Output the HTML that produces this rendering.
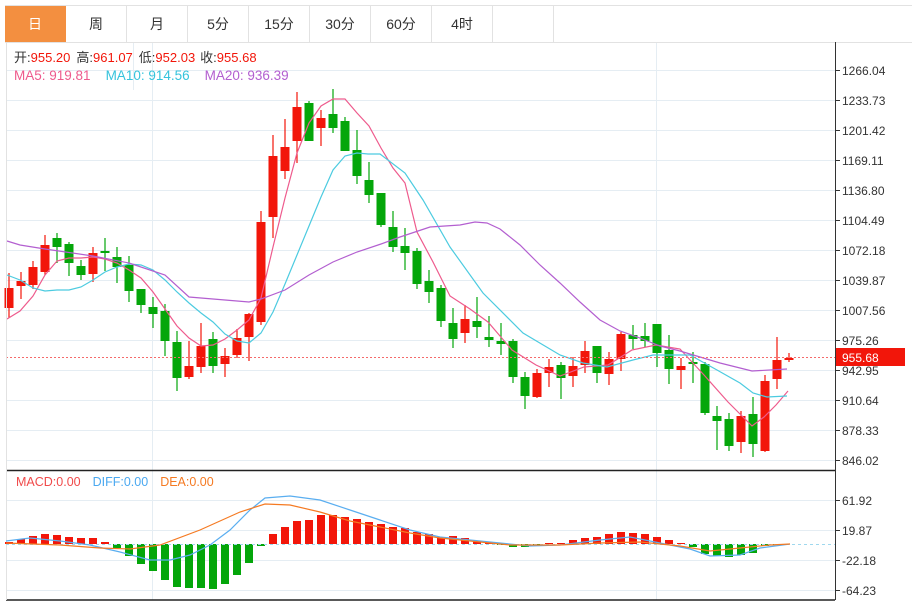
<!DOCTYPE html>
<html><head><meta charset="utf-8">
<style>
html,body{margin:0;padding:0;background:#fff;}
body{width:912px;height:603px;overflow:hidden;position:relative;font-family:"Liberation Sans","Noto Sans CJK SC",sans-serif;}
.tabs{position:absolute;left:5px;top:5px;height:36px;display:flex;border-top:1px solid #e2e2e2;border-bottom:1px solid #e2e2e2;width:907px;}
.tab{width:60px;border-right:1px solid #e2e2e2;text-align:center;line-height:36px;font-size:14px;color:#333;}
.tab.on{background:#f38f40;color:#fff;border-right:1px solid #f38f40;}
svg{position:absolute;left:0;top:0;}
</style></head><body>
<div class="tabs">
<div class="tab on">日</div><div class="tab">周</div><div class="tab">月</div><div class="tab">5分</div><div class="tab">15分</div><div class="tab">30分</div><div class="tab">60分</div><div class="tab">4时</div><div class="tab"></div>
</div>
<svg id="s" width="912" height="603" xmlns="http://www.w3.org/2000/svg" font-family="Liberation Sans, Noto Sans CJK SC, sans-serif"></svg>
<script>
var s=document.getElementById('s');var h='';
function L(x1,y1,x2,y2,c,w,extra){h+='<line x1="'+x1+'" y1="'+y1+'" x2="'+x2+'" y2="'+y2+'" stroke="'+c+'" stroke-width="'+(w||1)+'" '+(extra||'')+'/>';}
function T(x,y,t,c,sz){h+='<text x="'+x+'" y="'+y+'" fill="'+c+'" font-size="'+(sz||12)+'">'+t+'</text>';}
for(var i=0;i<14;i++){L(6,70.5+30*i,835,70.5+30*i,'#e5edf3');}
[500,530,560,590].forEach(function(y){L(6,y+.5,835,y+.5,'#e5edf3');});
L(152.5,42,152.5,600,'#e5edf3');L(656.5,42,656.5,600,'#e5edf3');
L(133.5,42,133.5,90,'#e5edf3');
L(6,42.5,912,42.5,'#e2e2e2');
var labels=['1266.04','1233.73','1201.42','1169.11','1136.80','1104.49','1072.18','1039.87','1007.56','975.26','942.95','910.64','878.33','846.02'];
labels.forEach(function(t,i){L(835,70.5+30*i,840,70.5+30*i,'#333');T(842,75+30*i,t,'#333',12);});
['61.92','19.87','-22.18','-64.23'].forEach(function(t,i){L(835,500.5+30*i,840,500.5+30*i,'#333');T(842,505+30*i,t,'#333',12);});
var C=[[273,318,288,308,1],[272,299,281,286,1],[261,289,267,285,1],[235,275,245,272,1],[233,263,238,247,0],[242,276,244,263,0],[260,280,266,275,0],[247,282,253,274,1],[238,271,251,253,0],[247,283,257,267,0],[256,302,265,291,0],[289,313,289,305,0],[297,328,307,314,0],[304,356,311,341,0],[331,391,342,378,0],[341,379,366,377,1],[323,373,346,367,1],[332,373,339,366,0],[348,377,356,364,1],[329,358,338,355,1],[313,361,314,337,1],[211,325,222,322,1],[135,238,156,217,1],[119,179,147,171,1],[92,163,107,141,1],[101,141,103,141,0],[110,146,118,128,1],[89,133,114,128,0],[117,151,121,151,0],[130,184,150,176,0],[162,203,180,195,0],[193,227,193,225,0],[211,252,227,247,0],[228,270,246,253,0],[248,289,251,284,0],[270,303,281,292,0],[285,327,288,321,0],[308,348,323,339,0],[305,343,319,333,1],[297,338,321,327,0],[316,347,337,340,0],[323,355,341,344,0],[339,383,341,377,0],[372,409,377,396,0],[369,398,373,397,1],[359,387,367,373,1],[362,399,365,378,0],[357,387,366,376,1],[341,373,351,365,1],[346,383,346,373,0],[352,385,359,374,1],[332,371,334,359,1],[325,349,335,339,0],[323,347,336,341,0],[324,367,324,353,0],[335,384,350,369,0],[358,389,366,370,1],[352,383,362,364,0],[362,415,364,413,0],[406,450,416,421,0],[413,451,419,446,0],[411,453,416,442,1],[397,457,414,444,0],[375,452,381,451,1],[337,389,360,379,1],[353,362,358,359,1]];
C.forEach(function(c,i){var x=9+12*i;var col=c[4]?'#f2160a':'#04a60a';
L(x,c[0],x,c[1],col,1.2);var hh=Math.max(c[3]-c[2],2);h+='<rect x="'+(x-4.5)+'" y="'+c[2]+'" width="9" height="'+hh+'" fill="'+col+'"/>';});
function P(pts,c,w){h+='<polyline fill="none" stroke="'+c+'" stroke-width="'+(w||1.2)+'" points="'+pts+'"/>';}
P('7,319 20,311 33,296 45,275 57,261 69,258 81,258 93,257 105,259 117,263 129,270 141,278 153,292 165,309 177,326 189,338 201,346 213,345 225,339 237,330 249,320 261,298 273,247 285,198 297,153 309,123 321,106 333,99 345,99 357,113 369,126 381,148 393,168 405,183 417,232 433,262 450,296 470,309 488,322 512,350 536,365 560,376 584,367 608,365 632,350 656,345 680,349 704,375 728,402 740,414 752,426 764,417 776,405 788,391','#ee5b8d');
P('7,275 20,280 33,288 45,291 57,290 69,290 81,287 93,280 105,272 117,267 129,264 141,265 153,270 165,280 177,292 189,303 201,313 213,322 225,334 237,341 249,343 261,333 273,312 285,284 297,255 309,226 321,197 333,170 345,156 357,153 368,154 380,154 405,173 423,200 450,247 483,293 523,333 560,355 583,363 607,367 633,360 653,355 690,355 717,370 740,383 753,393 767,397 787,396','#4ccbe0');
P('7,241 20,245 45,249 93,256 129,263 165,275 189,297 213,299 249,302 261,299 285,290 309,275 333,262 357,252 381,244 400,237 430,227 460,225 475,222 487,223 500,229 520,245 540,265 560,283 580,302 600,320 620,331 640,338 660,346 680,351 700,357 720,363 740,368 752,371 787,369','#b35fd0');
L(6,357.5,835,357.5,'#f56a6a',1,'stroke-dasharray="2,2"');
h+='<rect x="835" y="348" width="70" height="18" fill="#f2160a"/>';T(842,362,'955.68','#fff',12);
L(835.5,42,835.5,600,'#333');L(6,470.5,835,470.5,'#222',1.5);L(6,600,835,600,'#222',1.5);L(6.5,42,6.5,600,'#e2e2e2');
var M=[542,539,536,534,535,537,538,538,542,548,556,564,571,580,587,588,588,589,584,575,563,546,534,527,521,520,515,515,517,519,522,524,527,528,532,534,537,536,538,541,543,545,547,547,545,543,543,540,538,537,534,532,533,534,537,540,543,547,554,556,557,555,553,546,545,544];
M.forEach(function(v,i){var x=9+12*i;if(Math.abs(v-544)<0.5)return;var red=v<544;var y=red?v:544;var hh=Math.abs(v-544);
h+='<rect x="'+(x-4)+'" y="'+y+'" width="8" height="'+hh+'" fill="'+(red?'#f2160a':'#04a60a')+'"/>';});
L(6,544.5,835,544.5,'#9fd8ee',1,'stroke-dasharray="3,3"');
P('6,541 30,538 60,541 90,545 120,552 150,560 170,560 190,555 210,545 230,530 250,510 265,498 290,496 320,500 350,510 380,520 410,530 440,537 470,540 500,543 530,546 560,545 600,540 630,537 660,543 690,549 710,556 740,555 760,548 790,544','#5aaef0');
P('6,543 60,545 100,548 130,549 160,545 200,530 240,512 265,504 290,505 320,512 350,521 380,527 410,533 440,538 470,541 510,545 560,545 600,543 640,542 680,546 710,551 740,548 770,545 790,544','#f57a22');
h+='<text x="14" y="62" font-size="13"><tspan fill="#333">开:</tspan><tspan fill="#f2160a">955.20</tspan><tspan fill="#333" dx="6">高:</tspan><tspan fill="#f2160a">961.07</tspan><tspan fill="#333" dx="6">低:</tspan><tspan fill="#f2160a">952.03</tspan><tspan fill="#333" dx="5">收:</tspan><tspan fill="#f2160a">955.68</tspan></text>';
h+='<text x="14" y="80" font-size="13.5"><tspan fill="#ee5b8d">MA5: 919.81</tspan><tspan fill="#35c3dc" dx="15">MA10: 914.56</tspan><tspan fill="#b35fd0" dx="15">MA20: 936.39</tspan></text>';
h+='<text x="16" y="486" font-size="12.5"><tspan fill="#f04a4a">MACD:0.00</tspan><tspan fill="#4aa8f0" dx="12">DIFF:0.00</tspan><tspan fill="#f57a22" dx="12">DEA:0.00</tspan></text>';
s.innerHTML=h;
</script>
</body></html>
